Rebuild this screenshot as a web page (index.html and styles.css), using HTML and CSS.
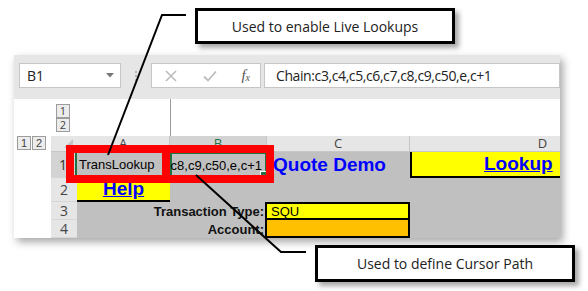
FILE: index.html
```html
<!DOCTYPE html>
<html lang="en">
<head>
    <meta charset="UTF-8">
    <title>Live Lookups</title>
    <link rel="stylesheet" href="styles.css">
</head>
<body>
    <div class="page">
        <div class="window">
            <div class="toolbar">
                <div class="namebox">
                    <span>B1</span>
                    <svg class="drop" width="8" height="5" viewBox="0 0 8 5"><path d="M0 0h8L4 4.5z" fill="#777"/></svg>
                </div>
                <div class="grip"><i></i><i></i><i></i></div>
                <div class="fbuttons">
                    <svg width="14" height="14" viewBox="0 0 14 14"><path d="M2 2l10 10M12 2L2 12" stroke="#bdbdbd" stroke-width="1.6"/></svg>
                    <svg width="16" height="14" viewBox="0 0 16 14"><path d="M2 7.5l4 4L14 2.5" stroke="#bdbdbd" stroke-width="1.8" fill="none"/></svg>
                    <span class="fx">f<sub>x</sub></span>
                </div>
                <div class="formula">Chain:c3,c4,c5,c6,c7,c8,c9,c50,e,c+1</div>
            </div>

            <div class="outline">
                <div class="levels-v">
                    <span class="lvl">1</span>
                    <span class="lvl">2</span>
                </div>
                <div class="group-line"></div>
            </div>

            <div class="sheet">
                <div class="levels-h"><span class="lvl">1</span><span class="lvl">2</span></div>
                <div class="corner"></div>
                <div class="colhdr">A</div>
                <div class="colhdr active">B</div>
                <div class="colhdr">C</div>
                <div class="colhdr">D</div>

                <div class="gutter"></div>
                <div class="rowhdr active">1</div>
                <div class="cell a1">TransLookup</div>
                <div class="cell b1">c8,c9,c50,e,c+1<i class="handle"></i></div>
                <div class="cell c1">Quote Demo</div>
                <div class="cell d1"><a>Lookup</a></div>

                <div class="gutter"></div>
                <div class="rowhdr">2</div>
                <div class="cell a2"><a>Help</a></div>
                <div class="cell"></div>
                <div class="cell"></div>
                <div class="cell"></div>

                <div class="gutter"></div>
                <div class="rowhdr">3</div>
                <div class="cell"></div>
                <div class="cell label">Transaction Type:</div>
                <div class="cell input yellow">SQU</div>
                <div class="cell"></div>

                <div class="gutter"></div>
                <div class="rowhdr">4</div>
                <div class="cell"></div>
                <div class="cell label">Account:</div>
                <div class="cell input orange"></div>
                <div class="cell"></div>
            </div>
        </div>

        <div class="mark mark-a"></div>
        <div class="mark mark-b"></div>

        <svg class="leaders" width="588" height="291">
            <polyline points="186,15 162,15 108,155" />
            <polyline points="196,175 281,252 306,252" />
        </svg>

        <div class="callout callout-top">Used to enable Live Lookups</div>
        <div class="callout callout-bottom">Used to define Cursor Path</div>
    </div>
</body>
</html>
```

FILE: styles.css
```css
body {
    margin: 0;
    background: #fff;
    font-family: "Open Sans", sans-serif;
}

.page {
    position: relative;
    width: 588px;
    height: 291px;
    overflow: hidden;
}

.window {
    margin: 55px 0 0 14px;
    width: 546px;
    height: 183px;
    background: #e6e6e6;
    overflow: hidden;
    box-shadow: 3px 4px 8px rgba(0, 0, 0, 0.35);
}

/* formula bar */
.toolbar {
    display: flex;
    align-items: flex-start;
    height: 44px;
    padding: 8px 0 0 5px;
    box-sizing: border-box;
}

.namebox,
.fbuttons,
.formula {
    height: 25px;
    box-sizing: border-box;
    background: #fff;
    border: 1px solid #c6c6c6;
    display: flex;
    align-items: center;
}

.namebox {
    width: 102px;
    padding: 0 6px 0 7px;
    justify-content: space-between;
    font-size: 14px;
    color: #222;
}

.grip {
    width: 30px;
    height: 25px;
    display: flex;
    flex-direction: column;
    align-items: center;
    justify-content: center;
    gap: 2px;
}

.grip i {
    width: 2px;
    height: 2px;
    background: #b5b5b5;
}

.fbuttons {
    width: 110px;
    padding: 0 10px 0 12px;
    justify-content: space-between;
}

.fx {
    font-family: "Liberation Serif", serif;
    font-style: italic;
    font-size: 15px;
    color: #555;
    line-height: 1;
}

.fx sub {
    font-size: 10px;
    vertical-align: -1px;
}

.formula {
    flex: 1;
    margin-left: 3px;
    padding-left: 11px;
    font-size: 14px;
    letter-spacing: -0.4px;
    color: #222;
    white-space: nowrap;
}

/* outline area */
.outline {
    display: flex;
    height: 37px;
    background: #fff;
}

.levels-v {
    display: flex;
    flex-direction: column;
    margin: 5px 0 0 42px;
}

.lvl {
    width: 14px;
    height: 14px;
    box-sizing: border-box;
    border: 1px solid #9c9c9c;
    background: #ececec;
    font-size: 11px;
    line-height: 12px;
    text-align: center;
    color: #444;
}

.group-line {
    width: 1px;
    margin-left: 100px;
    background: #9c9c9c;
}

/* grid */
.sheet {
    display: grid;
    grid-template-columns: 37px 26px 93px 97px 143px 266px;
    grid-template-rows: 16px 26px 24px 18px 18px;
    width: 662px;
    font-family: "Liberation Sans", Arial, sans-serif;
    font-size: 13px;
}

.levels-h {
    display: flex;
    gap: 1px;
    padding-left: 3px;
    background: #fff;
}

.gutter {
    background: #fff;
}

.corner {
    position: relative;
    background: #e6e6e6;
    border-bottom: 1px solid #c6c6c6;
}

.corner::after {
    content: "";
    position: absolute;
    right: 4px;
    bottom: 3px;
    border-left: 9px solid transparent;
    border-bottom: 9px solid #c3c3c3;
}

.colhdr {
    background: #e6e6e6;
    border-right: 1px solid #c6c6c6;
    border-bottom: 1px solid #c6c6c6;
    text-align: center;
    font-family: "Open Sans", sans-serif;
    font-size: 13px;
    line-height: 15px;
    color: #444;
}

.colhdr.active {
    background: #d3d3d3;
    color: #217346;
    border-bottom: 2px solid #217346;
}

.rowhdr {
    background: #e6e6e6;
    border-bottom: 1px solid #d6d6d6;
    font-family: "Open Sans", sans-serif;
    font-size: 14px;
    color: #444;
    display: flex;
    align-items: center;
    justify-content: center;
}

.rowhdr.active {
    background: #d3d3d3;
    border-right: 2px solid #217346;
    color: #333;
}

.cell {
    background: #c0c0c0;
    display: flex;
    align-items: center;
    white-space: nowrap;
    min-width: 0;
    box-sizing: border-box;
}

.a1 {
    padding-left: 2px;
    border-bottom: 2px solid #000;
}

.b1 {
    position: relative;
    justify-content: flex-end;
    padding-right: 3px;
    border: 2px solid #217346;
}

.handle {
    position: absolute;
    right: -2px;
    bottom: -2px;
    width: 5px;
    height: 5px;
    background: #217346;
    border: 1px solid #fff;
}

.c1 {
    padding-left: 6px;
    font-size: 19px;
    font-weight: bold;
    color: #0000ff;
    overflow: visible;
}

.d1 {
    background: #ffff00;
    border-left: 2px solid #000;
    border-bottom: 2px solid #000;
    padding-left: 72px;
}

.d1 a,
.a2 a {
    font-size: 19px;
    font-weight: bold;
    color: #0000ff;
    text-decoration: underline;
}

.a2 {
    background: #ffff00;
    justify-content: center;
    border-bottom: 2px solid #000;
}

.label {
    justify-content: flex-end;
    padding-right: 3px;
    font-weight: bold;
    color: #111;
}

.input {
    border: 2px solid #000;
    margin-left: -2px;
    padding-left: 4px;
}

.yellow {
    background: #ffff00;
}

.orange {
    background: #ffc000;
    border-top: 0;
}

/* annotations */
.mark {
    position: absolute;
    top: 145px;
    height: 38px;
    box-sizing: border-box;
    border: 8px solid #ff0000;
}

.mark-a {
    left: 66px;
    width: 104px;
}

.mark-b {
    left: 162px;
    width: 112px;
}

.leaders {
    position: absolute;
    left: 0;
    top: 0;
}

.leaders polyline {
    fill: none;
    stroke: #000;
    stroke-width: 2;
}

.callout {
    position: absolute;
    width: 260px;
    box-sizing: border-box;
    border: 3px solid #000;
    background: #fff;
    box-shadow: 4px 4px 5px rgba(0, 0, 0, 0.35);
    display: flex;
    align-items: center;
    justify-content: center;
    font-size: 14px;
    color: #222;
}

.callout-top {
    left: 195px;
    top: 8px;
    height: 36px;
}

.callout-bottom {
    left: 315px;
    top: 245px;
    height: 37px;
}
```
